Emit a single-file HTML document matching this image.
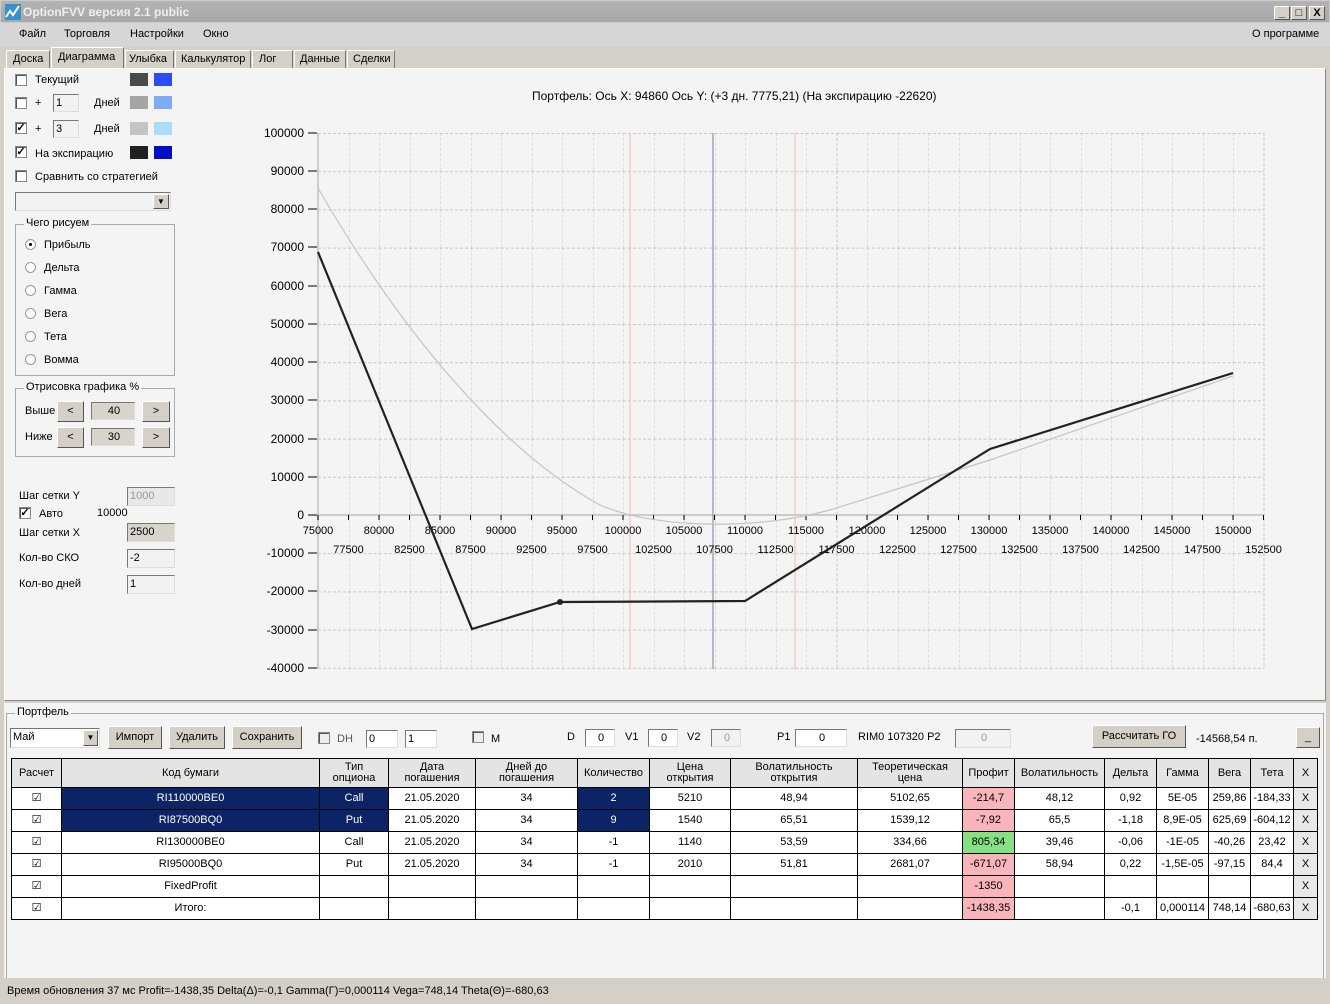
<!DOCTYPE html>
<html><head><meta charset="utf-8"><style>
*{margin:0;padding:0;box-sizing:border-box}
body{width:1330px;height:1004px;overflow:hidden;background:#d4d0c8;font-family:"Liberation Sans",sans-serif;font-size:11px;color:#000;position:relative}
.a{position:absolute}
.t{position:absolute;white-space:nowrap}
.cb{position:absolute;width:12px;height:12px;border:1px solid #888;background:#fff;box-shadow:inset 1px 1px 0 #555;font-size:11px;line-height:10px;text-align:center;font-weight:bold}
.inp{position:absolute;background:#f2f2f2;border:1px solid #777;border-right-color:#ddd;border-bottom-color:#ddd;padding-left:2px;line-height:16px;font-size:11px}
.btn{position:absolute;background:#d4d0c8;border:1px solid;border-color:#fff #555 #555 #fff;text-align:center;font-size:11px}
.rb{position:absolute;width:11px;height:11px;border-radius:50%;border:1px solid #999;background:#fff}
.grp{position:absolute;border:1px solid #aaa}
.grp span{position:absolute;top:-8px;left:8px;background:#f4f4f4;padding:0 2px}
table{border-collapse:collapse;position:absolute;left:11px;top:758px;font-size:11px;background:#fff}
td{border:1px solid #000;text-align:center;height:22px;padding:0;line-height:11px}
tr.h td{background:#e4e4e4;height:29px}
.sel{background:#0c2466;color:#fff}
.red{background:#f9b5bb}
.grn{background:#84e184}
.x{background:#e8e8e8}
</style></head><body>
<!-- title bar -->
<div class="a" style="left:0;top:0;width:1330px;height:23px;background:linear-gradient(#b4b4b4,#a8a8a8);border:1px solid #ccc"></div>
<div class="a" style="left:5px;top:4px;width:16px;height:16px;background:#3a8fd0"></div>
<svg class="a" style="left:5px;top:4px" width="16" height="16"><path d="M1 13 L5 7 L8 11 L14 2" stroke="#fff" stroke-width="2" fill="none"/></svg>
<div class="t" style="left:23px;top:5px;color:#eee;font-weight:bold;font-size:12px">OptionFVV версия 2.1 public</div>
<div class="btn" style="left:1274px;top:6px;width:16px;height:14px;line-height:12px;font-weight:bold">_</div>
<div class="btn" style="left:1291px;top:6px;width:16px;height:14px;line-height:12px">□</div>
<div class="btn" style="left:1309px;top:6px;width:16px;height:14px;line-height:12px;font-weight:bold">X</div>
<!-- menu -->
<div class="a" style="left:0;top:23px;width:1330px;height:24px;background:#d6d6d6"></div>
<div class="t" style="left:19px;top:28px">Файл</div>
<div class="t" style="left:64px;top:28px">Торговля</div>
<div class="t" style="left:130px;top:28px">Настройки</div>
<div class="t" style="left:203px;top:28px">Окно</div>
<div class="t" style="left:1252px;top:28px">О программе</div>
<!-- tabs -->
<div class="a" style="left:6px;top:50px;width:44px;height:18px;border:1px solid #fff;border-right-color:#777;border-bottom:none"></div><div class="t" style="left:13px;top:53px">Доска</div>
<div class="a" style="left:51px;top:47px;width:73px;height:22px;background:#d4d0c8;border:1px solid #fff;border-right-color:#777;border-bottom:none"></div><div class="t" style="left:58px;top:51px">Диаграмма</div>
<div class="a" style="left:125px;top:50px;width:49px;height:18px;border:1px solid #fff;border-right-color:#777;border-bottom:none"></div><div class="t" style="left:129px;top:53px">Улыбка</div>
<div class="a" style="left:175px;top:50px;width:76px;height:18px;border:1px solid #fff;border-right-color:#777;border-bottom:none"></div><div class="t" style="left:181px;top:53px">Калькулятор</div>
<div class="a" style="left:252px;top:50px;width:41px;height:18px;border:1px solid #fff;border-right-color:#777;border-bottom:none"></div><div class="t" style="left:259px;top:53px">Лог</div>
<div class="a" style="left:294px;top:50px;width:52px;height:18px;border:1px solid #fff;border-right-color:#777;border-bottom:none"></div><div class="t" style="left:300px;top:53px">Данные</div>
<div class="a" style="left:347px;top:50px;width:48px;height:18px;border:1px solid #fff;border-right-color:#777;border-bottom:none"></div><div class="t" style="left:353px;top:53px">Сделки</div>
<!-- main panel -->
<div class="a" style="left:4px;top:68px;width:1322px;height:633px;background:#f4f4f4;border:1px solid #fff;border-right-color:#888;border-bottom-color:#888"></div>
<div class="cb" style="left:15px;top:74px"></div><div class="t" style="left:35px;top:74px">Текущий</div>
<div class="a" style="left:130px;top:73px;width:18px;height:13px;background:#4a4a4a"></div><div class="a" style="left:154px;top:73px;width:18px;height:13px;background:#2c4cf4"></div>
<div class="cb" style="left:15px;top:97px"></div><div class="t" style="left:35px;top:97px">+</div><div class="inp" style="left:53px;top:94px;width:26px;height:18px">1</div><div class="t" style="left:94px;top:97px">Дней</div>
<div class="a" style="left:130px;top:96px;width:18px;height:13px;background:#a4a4a4"></div><div class="a" style="left:154px;top:96px;width:18px;height:13px;background:#7eaaf6"></div>
<div class="cb" style="left:15px;top:122px">✓</div><div class="t" style="left:35px;top:123px">+</div><div class="inp" style="left:53px;top:120px;width:26px;height:18px">3</div><div class="t" style="left:94px;top:123px">Дней</div>
<div class="a" style="left:130px;top:122px;width:18px;height:13px;background:#c4c4c4"></div><div class="a" style="left:154px;top:122px;width:18px;height:13px;background:#acdcfc"></div>
<div class="cb" style="left:15px;top:146px">✓</div><div class="t" style="left:35px;top:148px">На экспирацию</div>
<div class="a" style="left:130px;top:146px;width:18px;height:13px;background:#202020"></div><div class="a" style="left:154px;top:146px;width:18px;height:13px;background:#0010c0"></div>
<div class="cb" style="left:15px;top:170px"></div><div class="t" style="left:35px;top:171px">Сравнить со стратегией</div>
<div class="inp" style="left:15px;top:192px;width:156px;height:19px;background:#f2f2f2"></div>
<div class="btn" style="left:153px;top:194px;width:16px;height:15px;font-size:8px;line-height:13px">▼</div>
<div class="grp" style="left:15px;top:224px;width:160px;height:152px"><span>Чего рисуем</span></div>
<div class="rb" style="left:25px;top:239px"><div class="a" style="left:3px;top:3px;width:3px;height:3px;background:#000;border-radius:50%"></div></div><div class="t" style="left:44px;top:239px">Прибыль</div>
<div class="rb" style="left:25px;top:262px"></div><div class="t" style="left:44px;top:262px">Дельта</div>
<div class="rb" style="left:25px;top:285px"></div><div class="t" style="left:44px;top:285px">Гамма</div>
<div class="rb" style="left:25px;top:308px"></div><div class="t" style="left:44px;top:308px">Вега</div>
<div class="rb" style="left:25px;top:331px"></div><div class="t" style="left:44px;top:331px">Тета</div>
<div class="rb" style="left:25px;top:354px"></div><div class="t" style="left:44px;top:354px">Вомма</div>
<div class="grp" style="left:15px;top:388px;width:160px;height:69px"><span>Отрисовка графика %</span></div>
<div class="t" style="left:25px;top:405px">Выше</div><div class="btn" style="left:57px;top:401px;width:27px;height:21px;line-height:19px">&lt;</div><div class="inp" style="left:91px;top:402px;width:44px;height:18px;text-align:center;background:#d8d4cc">40</div><div class="btn" style="left:142px;top:401px;width:28px;height:21px;line-height:19px">&gt;</div>
<div class="t" style="left:25px;top:431px">Ниже</div><div class="btn" style="left:57px;top:427px;width:27px;height:21px;line-height:19px">&lt;</div><div class="inp" style="left:91px;top:428px;width:44px;height:18px;text-align:center;background:#d8d4cc">30</div><div class="btn" style="left:142px;top:427px;width:28px;height:21px;line-height:19px">&gt;</div>
<div class="t" style="left:19px;top:490px">Шаг сетки Y</div><div class="inp" style="left:127px;top:487px;width:48px;height:19px;color:#999;background:#e8e8e8">1000</div>
<div class="cb" style="left:19px;top:507px">✓</div><div class="t" style="left:39px;top:508px">Авто</div><div class="t" style="left:97px;top:507px">10000</div>
<div class="t" style="left:19px;top:527px">Шаг сетки X</div><div class="inp" style="left:127px;top:523px;width:48px;height:19px;background:#d8d4cc">2500</div>
<div class="t" style="left:19px;top:552px">Кол-во СКО</div><div class="inp" style="left:127px;top:549px;width:48px;height:19px">-2</div>
<div class="t" style="left:19px;top:578px">Кол-во дней</div><div class="inp" style="left:127px;top:575px;width:48px;height:19px">1</div>
<!-- chart -->
<div class="t" style="left:532px;top:89px;font-size:12px">Портфель: Ось X: 94860 Ось Y:  (+3 дн. 7775,21)  (На экспирацию -22620)</div>
<svg class="a" style="left:0;top:0" width="1330" height="700" font-family="Liberation Sans, sans-serif" font-size="11">
<defs><pattern id="g" x="318" y="133" width="30.5" height="38.2" patternUnits="userSpaceOnUse">
<line x1="0.5" y1="0" x2="0.5" y2="38.2" stroke="#c8c8c8" stroke-dasharray="3,2"/>
<line x1="0" y1="0.5" x2="30.5" y2="0.5" stroke="#c8c8c8" stroke-dasharray="3,2"/></pattern></defs>
<rect x="318" y="133" width="946" height="536" fill="url(#g)"/>
<line x1="1264" y1="133" x2="1264" y2="669" stroke="#c8c8c8" stroke-dasharray="3,2"/>
<line x1="318" y1="133" x2="318" y2="669" stroke="#ccc" stroke-width="2"/>
<line x1="318" y1="515" x2="1264" y2="515" stroke="#ccc" stroke-width="2"/>
<line x1="630" y1="133" x2="630" y2="669" stroke="#f4b8c0"/>
<line x1="795" y1="133" x2="795" y2="669" stroke="#f4b8c0"/>
<line x1="713" y1="133" x2="713" y2="669" stroke="#9aa8b8" stroke-width="1.5"/>
<g id="yt" stroke="#000">
<path d="M308 133h9M308 171h9M308 209h9M308 247h9M308 286h9M308 324h9M308 362h9M308 400h9M308 439h9M308 477h9M308 515h9M308 553h9M308 591h9M308 630h9M308 668h9"/>
<path d="M318 515v5M348.5 515v5M379 515v5M409.5 515v5M440 515v5M470.5 515v5M501 515v5M531.5 515v5M562 515v5M592.5 515v5M623 515v5M653.5 515v5M684 515v5M714.5 515v5M745 515v5M775.5 515v5M806 515v5M836.5 515v5M867 515v5M897.5 515v5M928 515v5M958.5 515v5M989 515v5M1019.5 515v5M1050 515v5M1080.5 515v5M1111 515v5M1141.5 515v5M1172 515v5M1202.5 515v5M1233 515v5M1263.5 515v5"/></g>
<g text-anchor="end" font-size="12">
<text x="304" y="137">100000</text><text x="304" y="175">90000</text><text x="304" y="213">80000</text><text x="304" y="251">70000</text><text x="304" y="290">60000</text><text x="304" y="328">50000</text><text x="304" y="366">40000</text><text x="304" y="404">30000</text><text x="304" y="443">20000</text><text x="304" y="481">10000</text><text x="304" y="519">0</text><text x="304" y="557">-10000</text><text x="304" y="595">-20000</text><text x="304" y="634">-30000</text><text x="304" y="672">-40000</text></g>
<g text-anchor="middle">
<text x="318" y="534">75000</text><text x="379" y="534">80000</text><text x="440" y="534">85000</text><text x="501" y="534">90000</text><text x="562" y="534">95000</text><text x="623" y="534">100000</text><text x="684" y="534">105000</text><text x="745" y="534">110000</text><text x="806" y="534">115000</text><text x="867" y="534">120000</text><text x="928" y="534">125000</text><text x="989" y="534">130000</text><text x="1050" y="534">135000</text><text x="1111" y="534">140000</text><text x="1172" y="534">145000</text><text x="1233" y="534">150000</text>
<text x="348.5" y="553">77500</text><text x="409.5" y="553">82500</text><text x="470.5" y="553">87500</text><text x="531.5" y="553">92500</text><text x="592.5" y="553">97500</text><text x="653.5" y="553">102500</text><text x="714.5" y="553">107500</text><text x="775.5" y="553">112500</text><text x="836.5" y="553">117500</text><text x="897.5" y="553">122500</text><text x="958.5" y="553">127500</text><text x="1019.5" y="553">132500</text><text x="1080.5" y="553">137500</text><text x="1141.5" y="553">142500</text><text x="1202.5" y="553">147500</text><text x="1263.5" y="553">152500</text></g>
<path d="M318 188 C400 330 500 450 600 505 C650 527 750 532 830 510 L990 460 L1233 376" fill="none" stroke="#c4c4c4" stroke-width="1.2"/>
<path d="M318 252 L472 629 L560 602 L745 601 L990 449 L1233 373" fill="none" stroke="#222" stroke-width="2.2"/>
<circle cx="560" cy="602" r="3" fill="#222"/>
</svg>
<!-- portfolio -->
<div class="a" style="left:4px;top:703px;width:1322px;height:275px;background:#f4f4f4"></div>
<div class="grp" style="left:6px;top:713px;width:1318px;height:265px;border-bottom:none"><span>Портфель</span></div>
<div class="inp" style="left:10px;top:728px;width:90px;height:20px;background:#fff">Май</div><div class="btn" style="left:83px;top:730px;width:15px;height:16px;font-size:8px;line-height:14px">▼</div>
<div class="btn" style="left:108px;top:726px;width:54px;height:23px;line-height:21px">Импорт</div>
<div class="btn" style="left:169px;top:726px;width:56px;height:23px;line-height:21px">Удалить</div>
<div class="btn" style="left:232px;top:726px;width:70px;height:23px;line-height:21px">Сохранить</div>
<div class="cb" style="left:318px;top:732px;background:#eee"></div><div class="t" style="left:337px;top:733px;color:#555">DH</div>
<div class="inp" style="left:366px;top:730px;width:32px;height:18px;background:#fff">0</div>
<div class="inp" style="left:405px;top:730px;width:32px;height:18px;background:#fff">1</div>
<div class="cb" style="left:472px;top:731px;background:#eee"></div><div class="t" style="left:491px;top:733px">M</div>
<div class="t" style="left:567px;top:731px">D</div><div class="inp" style="left:585px;top:729px;width:30px;height:18px;text-align:center;background:#fff">0</div>
<div class="t" style="left:625px;top:731px">V1</div><div class="inp" style="left:648px;top:729px;width:30px;height:18px;text-align:center;background:#fff">0</div>
<div class="t" style="left:687px;top:731px">V2</div><div class="inp" style="left:711px;top:729px;width:30px;height:18px;text-align:center;color:#999">0</div>
<div class="t" style="left:777px;top:731px">P1</div><div class="inp" style="left:795px;top:729px;width:52px;height:18px;text-align:center;background:#fff">0</div>
<div class="t" style="left:858px;top:731px">RIM0 107320  P2</div><div class="inp" style="left:955px;top:729px;width:56px;height:19px;text-align:center;color:#999">0</div>
<div class="btn" style="left:1092px;top:725px;width:94px;height:23px;line-height:21px">Рассчитать ГО</div>
<div class="t" style="left:1196px;top:733px">-14568,54 п.</div>
<div class="btn" style="left:1296px;top:727px;width:24px;height:21px;line-height:19px">_</div>
<table>
<colgroup><col style="width:50px"><col style="width:258px"><col style="width:69px"><col style="width:87px"><col style="width:102px"><col style="width:72px"><col style="width:81px"><col style="width:127px"><col style="width:105px"><col style="width:52px"><col style="width:90px"><col style="width:52px"><col style="width:52px"><col style="width:42px"><col style="width:43px"><col style="width:24px"></colgroup>
<tr class="h"><td>Расчет</td><td>Код бумаги</td><td>Тип<br>опциона</td><td>Дата<br>погашения</td><td>Дней до<br>погашения</td><td>Количество</td><td>Цена<br>открытия</td><td>Волатильность<br>открытия</td><td>Теоретическая<br>цена</td><td>Профит</td><td>Волатильность</td><td>Дельта</td><td>Гамма</td><td>Вега</td><td>Тета</td><td>X</td></tr>
<tr><td>☑</td><td class="sel">RI110000BE0</td><td class="sel">Call</td><td>21.05.2020</td><td>34</td><td class="sel">2</td><td>5210</td><td>48,94</td><td>5102,65</td><td class="red">-214,7</td><td>48,12</td><td>0,92</td><td>5E-05</td><td>259,86</td><td>-184,33</td><td class="x">X</td></tr>
<tr><td>☑</td><td class="sel">RI87500BQ0</td><td class="sel">Put</td><td>21.05.2020</td><td>34</td><td class="sel">9</td><td>1540</td><td>65,51</td><td>1539,12</td><td class="red">-7,92</td><td>65,5</td><td>-1,18</td><td>8,9E-05</td><td>625,69</td><td>-604,12</td><td class="x">X</td></tr>
<tr><td>☑</td><td>RI130000BE0</td><td>Call</td><td>21.05.2020</td><td>34</td><td>-1</td><td>1140</td><td>53,59</td><td>334,66</td><td class="grn">805,34</td><td>39,46</td><td>-0,06</td><td>-1E-05</td><td>-40,26</td><td>23,42</td><td class="x">X</td></tr>
<tr><td>☑</td><td>RI95000BQ0</td><td>Put</td><td>21.05.2020</td><td>34</td><td>-1</td><td>2010</td><td>51,81</td><td>2681,07</td><td class="red">-671,07</td><td>58,94</td><td>0,22</td><td>-1,5E-05</td><td>-97,15</td><td>84,4</td><td class="x">X</td></tr>
<tr><td>☑</td><td>FixedProfit</td><td></td><td></td><td></td><td></td><td></td><td></td><td></td><td class="red">-1350</td><td></td><td></td><td></td><td></td><td></td><td class="x">X</td></tr>
<tr><td>☑</td><td>Итого:</td><td></td><td></td><td></td><td></td><td></td><td></td><td></td><td class="red">-1438,35</td><td></td><td>-0,1</td><td>0,000114</td><td>748,14</td><td>-680,63</td><td class="x">X</td></tr>
</table>
<!-- status -->
<div class="t" style="left:7px;top:985px">Время обновления 37 мс  Profit=-1438,35 Delta(Δ)=-0,1 Gamma(Γ)=0,000114 Vega=748,14 Theta(Θ)=-680,63</div>
</body></html>
